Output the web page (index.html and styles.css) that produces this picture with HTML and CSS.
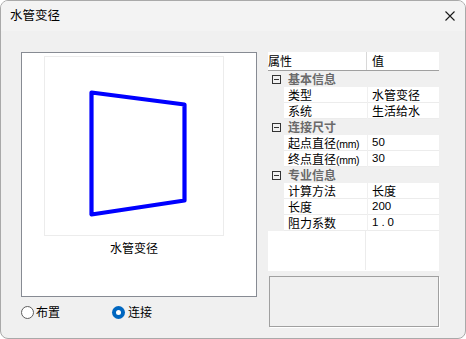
FILE: index.html
```html
<!DOCTYPE html>
<html lang="zh-cmn-Hans">
<head>
    <meta charset="UTF-8">
    <meta name="viewport" content="width=device-width, initial-scale=1.0">
    <title>水管变径</title>
    <link rel="stylesheet" href="styles.css">
</head>
<body>
    <div class="window">
        <div class="titlebar">
            <span class="title">水管变径</span>
            <svg class="close" width="10" height="10" viewBox="0 0 10 10">
                <path d="M0.5 0.5 L9.5 9.5 M9.5 0.5 L0.5 9.5" stroke="#1a1a1a" stroke-width="1.1" fill="none"/>
            </svg>
        </div>
        <div class="content">
            <!-- 左侧预览 -->
            <div class="left">
                <div class="preview">
                    <div class="frame">
                        <svg width="178" height="178" viewBox="0 0 178 178">
                            <polygon points="46.5,35.5 139.5,47.5 139.5,143.5 46.5,157.5" fill="none" stroke="#0000ff" stroke-width="4.2" stroke-linejoin="round"/>
                        </svg>
                    </div>
                    <div class="caption">水管变径</div>
                </div>
                <div class="radios">
                    <label class="radio"><span class="dot"></span>布置</label>
                    <label class="radio checked"><span class="dot"></span>连接</label>
                </div>
            </div>
            <!-- 右侧属性表 -->
            <div class="right">
                <div class="grid">
                    <div class="head">
                        <div class="hname">属性</div>
                        <div class="hval">值</div>
                    </div>
                    <div class="cat"><span class="fold"></span>基本信息</div>
                    <div class="row"><div class="name">类型</div><div class="val">水管变径</div></div>
                    <div class="row"><div class="name">系统</div><div class="val">生活给水</div></div>
                    <div class="cat"><span class="fold"></span>连接尺寸</div>
                    <div class="row"><div class="name">起点直径<span class="unit">(mm)</span></div><div class="val num">50</div></div>
                    <div class="row"><div class="name">终点直径<span class="unit">(mm)</span></div><div class="val num">30</div></div>
                    <div class="cat"><span class="fold"></span>专业信息</div>
                    <div class="row"><div class="name">计算方法</div><div class="val">长度</div></div>
                    <div class="row"><div class="name">长度</div><div class="val num">200</div></div>
                    <div class="row"><div class="name">阻力系数</div><div class="val num wide">1.0</div></div>
                    <div class="empty"><div class="ename"></div><div class="eval"></div></div>
                </div>
                <div class="desc"></div>
            </div>
        </div>
    </div>
</body>
</html>
```

FILE: styles.css
```css
*{
    margin:0;
    padding:0;
    box-sizing:border-box;
}
body{
    width:466px;
    height:339px;
    background:#ffffff;
    font-family:"Noto Sans CJK SC","Liberation Sans",sans-serif;
    font-size:12px;
    color:#000;
}
.window{
    width:466px;
    height:339px;
    border:1px solid #a9a9a9;
    border-radius:8px;
    background:#f0f0f0;
    overflow:hidden;
    display:flex;
    flex-direction:column;
}
.titlebar{
    height:30px;
    background:#f3f3f3;
    display:flex;
    align-items:center;
    justify-content:space-between;
    padding:0 10px 0 9px;
}
.title{
    font-size:12.5px;
    line-height:16px;
    margin-top:-2px;
}
.close{
    margin-top:-1px;
}
.content{
    display:flex;
    padding:21px 0 0 20px;
}

/* 预览 */
.left{
    width:236px;
}
.preview{
    height:245px;
    background:#fff;
    border:1px solid #878b93;
    padding:3px 0 0 22px;
}
.frame{
    width:180px;
    height:180px;
    border:1px solid #ececec;
}
.frame svg{
    display:block;
}
.caption{
    width:180px;
    text-align:center;
    line-height:16px;
    margin-top:4px;
}
.radios{
    display:flex;
    margin-top:7px;
    height:16px;
    align-items:center;
}
.radio{
    display:flex;
    align-items:center;
    width:91px;
    line-height:16px;
}
.dot{
    width:13px;
    height:13px;
    border:1px solid #5e5e5e;
    border-radius:50%;
    background:#fff;
    margin-right:2px;
    position:relative;
}
.checked .dot{
    border:none;
    background:#0067c0;
    margin-right:3px;
}
.checked .dot:after{
    content:"";
    position:absolute;
    left:4px;
    top:4px;
    width:5px;
    height:5px;
    border-radius:50%;
    background:#fff;
}

/* 属性表 */
.right{
    width:171px;
    margin-left:11px;
}
.grid{
    background:#fff;
    height:219px;
    display:flex;
    flex-direction:column;
}
.head{
    display:flex;
    height:19px;
    border-bottom:1px solid #a0a0a0;
    line-height:18px;
}
.hname{
    width:99px;
    border-right:1px solid #d8d8d8;
}
.hval{
    padding-left:5px;
}
.cat{
    height:16px;
    background:#f0f0f0;
    font-weight:bold;
    color:#6a6a6a;
    line-height:16px;
    display:flex;
    align-items:center;
}
.fold{
    width:9px;
    height:9px;
    border:1px solid #333;
    margin:0 7px 0 4px;
    position:relative;
}
.fold:after{
    content:"";
    position:absolute;
    left:1px;
    top:3px;
    width:5px;
    height:1px;
    background:#333;
}
.row{
    display:flex;
    height:16px;
    line-height:15px;
    background:#f0f0f0;
    padding-left:16px;
}
.name{
    width:83px;
    background:#fff;
    border-bottom:1px solid #ececec;
    padding-left:4px;
    white-space:nowrap;
}
.unit{
    font-family:"Liberation Sans",sans-serif;
    font-size:10.5px;
    letter-spacing:-0.3px;
}
.val{
    flex:1;
    background:#fff;
    border-bottom:1px solid #ececec;
    margin-left:1px;
    padding-left:4px;
}
.num{
    font-family:"Liberation Sans",sans-serif;
    font-size:11.5px;
}
.wide{
    letter-spacing:3px;
}
.empty{
    flex:1;
    display:flex;
}
.ename{
    width:98px;
    height:39px;
    border-right:1px solid #ececec;
}
.desc{
    margin-top:5px;
    height:51px;
    width:170px;
    margin-left:1px;
    border:1px solid #a0a0a0;
    background:#f0f0f0;
    box-shadow:1px 1px 0 #fff;
}
```
